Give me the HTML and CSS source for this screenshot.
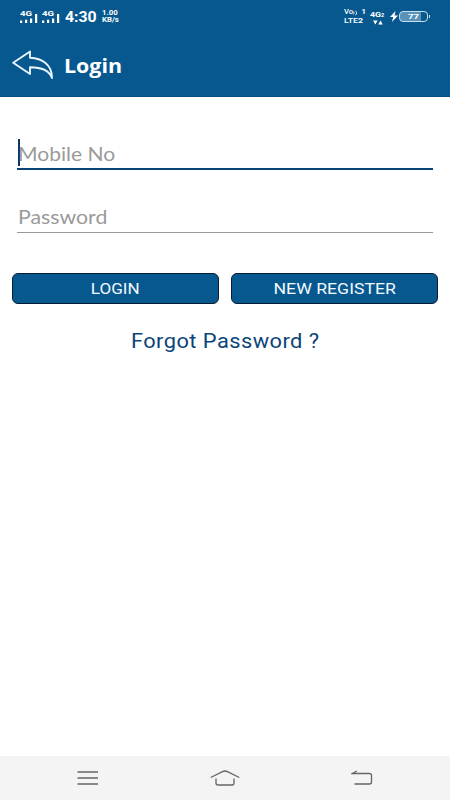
FILE: index.html
```html
<!DOCTYPE html>
<html lang="en">

<head>
  <meta charset="UTF-8">
  <meta name="viewport" content="width=device-width, initial-scale=1.0">
  <title>Login</title>
  <link rel="stylesheet" href="styles.css">
</head>

<body>
  <div class="app">
    <header class="header">
      <!-- status bar -->
      <div class="status">
        <div class="sim">
          <span class="net">4G</span>
          <svg width="18" height="9" viewBox="0 0 18 9" fill="#fff"><path d="M0 6.500h2.200v2.500H0zM5 5.800h2.200v3.200H5zM10 4.500h2.200v4.500H10zM15 0h2.200v9H15z"/></svg>
        </div>
        <div class="sim sim-two">
          <span class="net">4G</span>
          <svg width="18" height="9" viewBox="0 0 18 9" fill="#fff"><path d="M0 6.500h2.200v2.500H0zM5 5.800h2.200v3.200H5zM10 4.500h2.200v4.500H10zM15 0h2.200v9H15z"/></svg>
        </div>
        <span class="time">4:30</span>
        <div class="speed"><span>1.00</span><span>KB/s</span></div>
        <div class="volte">
          <div class="vo">
            <span>Vo</span>
            <svg width="5" height="8" viewBox="0 -1 5 8" fill="none" stroke="#fff" stroke-width=".8"><path d="M.5 1.500Q2 3 .5 4.500M2.500 .8Q4.800 3 2.500 5.200"/></svg>
            <b>1</b>
          </div>
          <span class="lte">LTE<b>2</b></span>
        </div>
        <div class="data">
          <span>4G<small>2</small></span>
          <svg width="10" height="5" viewBox="0 0 10 5" fill="#fff"><path d="M0 .5h4.600L2.300 4.500zM5.200 4.500h4.600L7.500 .5z"/></svg>
        </div>
        <svg class="bolt" width="8" height="11" viewBox="0 0 8 11" fill="#fff"><path d="M5.500 0L0 6h3.200L2 11l6-6.500H4.600z"/></svg>
        <div class="battery"><span>77</span></div>
      </div>

      <!-- title bar -->
      <div class="title-bar">
        <svg class="back" width="42" height="30" viewBox="0 0 42 30" fill="none" stroke="#e9f6ff" stroke-width="1.900" stroke-linejoin="round">
          <path d="M1.200 12.800L18 1.500V7.800C30 8.200 40 14.500 40 28C37 19.500 28 17.300 18 17.300V24Z"/>
        </svg>
        <h1 class="title">Login</h1>
      </div>
    </header>

    <main class="form">
      <div class="field active"><span class="cursor"></span><span class="hint">Mobile No</span></div>
      <div class="field"><span class="hint">Password</span></div>
      <div class="buttons">
        <button class="btn"><span>LOGIN</span></button>
        <button class="btn"><span class="wide">NEW REGISTER</span></button>
      </div>
      <a class="forgot">Forgot Password ?</a>
    </main>

    <nav class="nav">
      <svg width="22" height="16" viewBox="0 0 22 16" fill="none" stroke="#666" stroke-width="1.300"><path d="M.5 2h20.500M.5 8h20.500M.5 14h20.500"/></svg>
      <svg width="30" height="16" viewBox="0 0 30 16" fill="none" stroke="#666" stroke-width="1.300"><path d="M.7 7.500L12.500 1.600Q15 .4 17.500 1.600L29.300 7.500M6 8.500V13Q6 15 8 15H22Q24 15 24 13V8.500"/></svg>
      <svg width="22" height="16" viewBox="0 0 22 16" fill="none" stroke="#666" stroke-width="1.300"><path d="M5.800 1L1.500 3.500H18.500Q20.500 3.500 20.500 5.500V12Q20.500 14 18.500 14H3.500"/></svg>
    </nav>
  </div>
</body>

</html>
```
FILE: styles.css
```css
* {
  box-sizing: border-box;
  margin: 0;
  padding: 0;
}

body {
  background: #fff;
  font-family: Roboto, "Liberation Sans", sans-serif;
}

.app {
  display: flex;
  flex-direction: column;
  width: 450px;
  height: 800px;
}

svg {
  display: block;
  flex: none;
}

.header {
  height: 97px;
  background: #07588f;
  border-bottom: 1px solid #064d80;
  color: #fff;
}

/* status bar */
.status {
  display: flex;
  align-items: flex-start;
  height: 34px;
  padding: 10px 0 0 20px;
  font-family: Roboto, sans-serif;
  font-weight: 700;
  white-space: nowrap;
}

.sim {
  width: 22px;
  height: 13px;
  display: flex;
  flex-direction: column;
}

.sim svg {
  margin-top: -3px;
}

.net {
  width: 12px;
  font-size: 8px;
  line-height: 7px;
  transform: scaleX(1.2);
  transform-origin: left;
}

.time {
  width: 37px;
  font-size: 14px;
  line-height: 15px;
  transform: scaleX(1.13);
  transform-origin: left;
}

.sim-two {
  width: 23px;
}

.speed {
  display: flex;
  flex-direction: column;
  width: 242px;
  font-size: 6.5px;
  font-weight: 700;
  line-height: 7px;
  transform: scaleX(1.2);
  transform-origin: left;
}

.volte {
  width: 26px;
  margin-top: -1px;
  font-size: 8px;
  font-weight: 500;
  line-height: 8px;
  transform: scaleX(1.1);
  transform-origin: left;
}

.vo {
  display: flex;
  height: 7px;
  width: 20px;
  font-size: 7px;
  line-height: 7px;
}

.vo b {
  margin-left: auto;
}

.lte {
  display: block;
  margin-top: 1px;
}

.data {
  width: 20px;
  font-size: 8px;
  line-height: 9px;
}

.data span {
  display: block;
  transform: scaleX(1.1);
  transform-origin: left;
}

.data small {
  font-size: 5px;
}

.data svg {
  margin-left: 3px;
}

.bolt {
  margin-top: 1px;
}

.battery {
  position: relative;
  width: 29px;
  height: 11px;
  margin: 1px 0 0 1px;
  border: 1px solid #c8dfed;
  border-radius: 4px;
  background: linear-gradient(90deg, #5a91b8 77%, #07588f 77%);
  font-size: 8px;
  line-height: 9px;
  text-align: center;
}

.battery span {
  display: block;
  transform: scaleX(1.2);
}

.battery::after {
  content: "";
  position: absolute;
  right: -3px;
  top: 3px;
  width: 1px;
  height: 3px;
  background: #c8dfed;
}

/* title bar */
.title-bar {
  display: flex;
  align-items: center;
  height: 62px;
  padding: 1px 12px;
}

.title {
  margin-left: 10px;
  padding-top: 2px;
  font: 700 20px/28px "Open Sans", sans-serif;
  transform: scaleX(1.07);
  transform-origin: left;
}

/* form */
.form {
  flex: 1;
  display: flex;
  flex-direction: column;
  padding: 41px 12px 0;
}

.field {
  position: relative;
  display: flex;
  align-items: center;
  height: 32px;
  margin: 0 5px;
  border-bottom: 1px solid #999;
}

.field.active {
  border-bottom: 2px solid #0b4479;
  margin-bottom: 31px;
}

.cursor {
  position: absolute;
  left: 1px;
  top: 1px;
  width: 2px;
  height: 27px;
  background: #0b3563;
}

.hint {
  margin-left: 1px;
  font: 400 19px/24px Lato, sans-serif;
  color: #9a9a9a;
  transform: scaleX(1.12);
  transform-origin: left;
}

.active .hint {
  padding-top: 2px;
  transform: scaleX(1.11);
}

.buttons {
  display: flex;
  gap: 12px;
  margin-top: 40px;
}

.btn {
  flex: 1;
  height: 31px;
  padding-top: 1px;
  border: 1px solid #0a1c33;
  border-radius: 6px;
  background: #07588f;
  color: #f2faff;
  font: 400 15.5px/20px Roboto, sans-serif;
}

.btn span {
  display: inline-block;
  transform: scaleX(1.1);
}

.btn .wide {
  transform: scaleX(1.14);
}

.forgot {
  align-self: center;
  margin-top: 25px;
  color: #0b4479;
  font-size: 19.5px;
  line-height: 26px;
  letter-spacing: .4px;
  transform: scaleX(1.12);
}

/* bottom navigation */
.nav {
  display: flex;
  justify-content: space-between;
  align-items: center;
  height: 44px;
  padding: 0 77px;
  background: #f4f4f4;
}
```
